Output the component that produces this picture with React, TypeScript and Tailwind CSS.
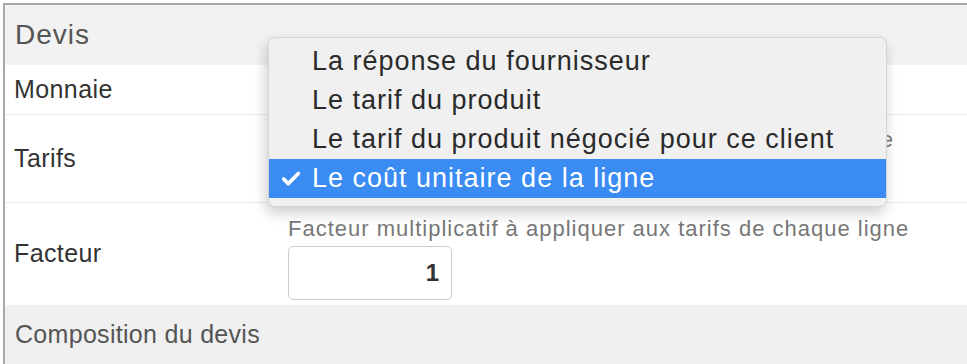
import { Check } from "lucide-react";

const options = [
  "La réponse du fournisseur",
  "Le tarif du produit",
  "Le tarif du produit négocié pour ce client",
  "Le coût unitaire de la ligne",
];

const App = () => {
  const selected = 3;

  return (
    <div className="relative h-[364px] overflow-hidden bg-white pl-[3px] pt-[3px] font-['Liberation_Sans',Arial,sans-serif]">
      <div className="border-l-2 border-t-2 border-[#a9a9a9]">
        {/* en-tête */}
        <div className="flex h-[60px] items-center bg-[#f2f2f2] pl-[10px] text-[28px] tracking-[1px] text-[#555]">
          Devis
        </div>

        {/* Monnaie */}
        <div className="flex h-[50px] items-center border-b border-[#ececec] pl-[9px] text-[25px] tracking-[0.4px] text-[#333]">
          Monnaie
        </div>

        {/* Tarifs */}
        <div className="flex h-[88px] border-b border-[#ececec]">
          <div className="flex w-[283px] items-center pl-[9px] text-[25px] tracking-[0.4px] text-[#333]">Tarifs</div>
          <div className="flex flex-col pt-[11px]">
            <p className="text-[22px] leading-[27px] tracking-[1px] text-[#777]">
              Tarifs à utiliser comme base pour le prix de chaque ligne
            </p>
            <div className="mt-[5px] h-[38px] w-[590px] rounded border border-[#ccc]" />
          </div>
        </div>

        {/* Facteur */}
        <div className="flex h-[102px]">
          <div className="flex w-[283px] items-center pl-[9px] text-[25px] tracking-[0.4px] text-[#333]">Facteur</div>
          <div className="flex flex-col pt-[12px]">
            <p className="text-[22px] leading-[27px] tracking-[1px] text-[#777]">
              Facteur multiplicatif à appliquer aux tarifs de chaque ligne
            </p>
            <div className="mt-[4px] flex h-[54px] w-[164px] items-center justify-end rounded-[5px] border border-[#ccc] pr-[12px] text-[24px] font-bold text-[#333]">
              1
            </div>
          </div>
        </div>

        {/* pied */}
        <div className="flex h-[60px] items-center bg-[#f0f0f0] pl-[10px] text-[25px] tracking-[0.3px] text-[#555]">
          Composition du devis
        </div>
      </div>

      {/* menu déroulant natif ouvert */}
      <div className="absolute left-[268px] top-[37px] w-[619px] rounded-[7px] border border-[#d4d4d4] bg-[#f0f0f0] pb-[8px] pt-[4px] shadow-[-2px_6px_14px_rgba(0,0,0,0.2)]">
        {options.map((opt, i) => (
          <div
            key={opt}
            className={
              i === selected
                ? "flex h-[39px] items-center bg-[#3a8cf2] text-[27px] tracking-[1px] text-white"
                : "flex h-[39px] items-center text-[27px] tracking-[1px] text-[#2a2a2a]"
            }
          >
            <span className="flex w-[43px] justify-center pl-[1px]">
              {i === selected && <Check size={22} strokeWidth={4} />}
            </span>
            {opt}
          </div>
        ))}
      </div>
    </div>
  );
};

export default App;
